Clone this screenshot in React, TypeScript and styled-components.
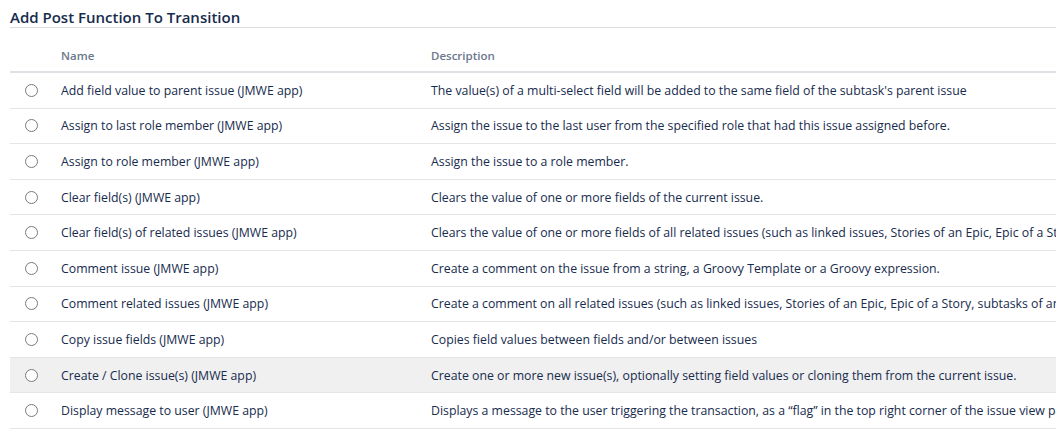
import React from "react";
import styled, { createGlobalStyle } from "styled-components";

const Global = createGlobalStyle`
  html, body { margin: 0; padding: 0; background: #fff; overflow: hidden; }
  body { font-family: "Open Sans", "Noto Sans", sans-serif; color: #172b4d; }
`;

const Page = styled.div`
  width: 1056px;
  height: 433px;
  padding-left: 10px;
  box-sizing: border-box;
  overflow: hidden;
`;

const Title = styled.h2`
  margin: 0;
  padding-top: 8px;
  height: 19px;
  font-size: 15px;
  line-height: 19px;
  font-weight: 600;
  color: #172b4d;
  border-bottom: 1px solid #dcdde0;
  white-space: nowrap;
`;

const Table = styled.div`
  display: grid;
  grid-template-columns: 41px 370px 1fr;
`;

const HeadCell = styled.div`
  height: 45px;
  box-sizing: border-box;
  padding: 0 10px 7px;
  display: flex;
  align-items: flex-end;
  font-size: 11.5px;
  line-height: 16px;
  font-weight: 600;
  color: #6b778c;
  border-bottom: 2px solid #dfe1e6;
`;

const Cell = styled.div<{ $active?: boolean }>`
  height: 35.6px;
  box-sizing: border-box;
  padding: 0 10px;
  display: flex;
  align-items: center;
  font-size: 12.3px;
  white-space: nowrap;
  overflow: hidden;
  color: #172b4d;
  background: ${(p) => (p.$active ? "#f0f0f0" : "#fff")};
  border-bottom: 1px solid #e4e5e7;
`;

const RadioCell = styled(Cell)`
  justify-content: center;
  padding: 0;
  padding-left: 2px;
`;

const Radio = styled.span`
  width: 11px;
  height: 11px;
  border-radius: 50%;
  border: 1px solid #7a7a7a;
  background: #fff;
`;

const rows: [string, string][] = [
  ["Add field value to parent issue (JMWE app)", "The value(s) of a multi-select field will be added to the same field of the subtask's parent issue"],
  ["Assign to last role member (JMWE app)", "Assign the issue to the last user from the specified role that had this issue assigned before."],
  ["Assign to role member (JMWE app)", "Assign the issue to a role member."],
  ["Clear field(s) (JMWE app)", "Clears the value of one or more fields of the current issue."],
  ["Clear field(s) of related issues (JMWE app)", "Clears the value of one or more fields of all related issues (such as linked issues, Stories of an Epic, Epic of a Story, subtasks of an issue, etc.)"],
  ["Comment issue (JMWE app)", "Create a comment on the issue from a string, a Groovy Template or a Groovy expression."],
  ["Comment related issues (JMWE app)", "Create a comment on all related issues (such as linked issues, Stories of an Epic, Epic of a Story, subtasks of an issue, etc.)"],
  ["Copy issue fields (JMWE app)", "Copies field values between fields and/or between issues"],
  ["Create / Clone issue(s) (JMWE app)", "Create one or more new issue(s), optionally setting field values or cloning them from the current issue."],
  ["Display message to user (JMWE app)", "Displays a message to the user triggering the transaction, as a \u201cflag\u201d in the top right corner of the issue view page."],
];

export default function App() {
  return (
    <Page>
      <Global />
      <Title>Add Post Function To Transition</Title>
      <Table>
        <HeadCell />
        <HeadCell>Name</HeadCell>
        <HeadCell>Description</HeadCell>
        {rows.map(([name, desc], i) => {
          const active = i === 8;
          return (
            <React.Fragment key={name}>
              <RadioCell $active={active}>
                <Radio />
              </RadioCell>
              <Cell $active={active}>{name}</Cell>
              <Cell $active={active}>{desc}</Cell>
            </React.Fragment>
          );
        })}
      </Table>
    </Page>
  );
}
